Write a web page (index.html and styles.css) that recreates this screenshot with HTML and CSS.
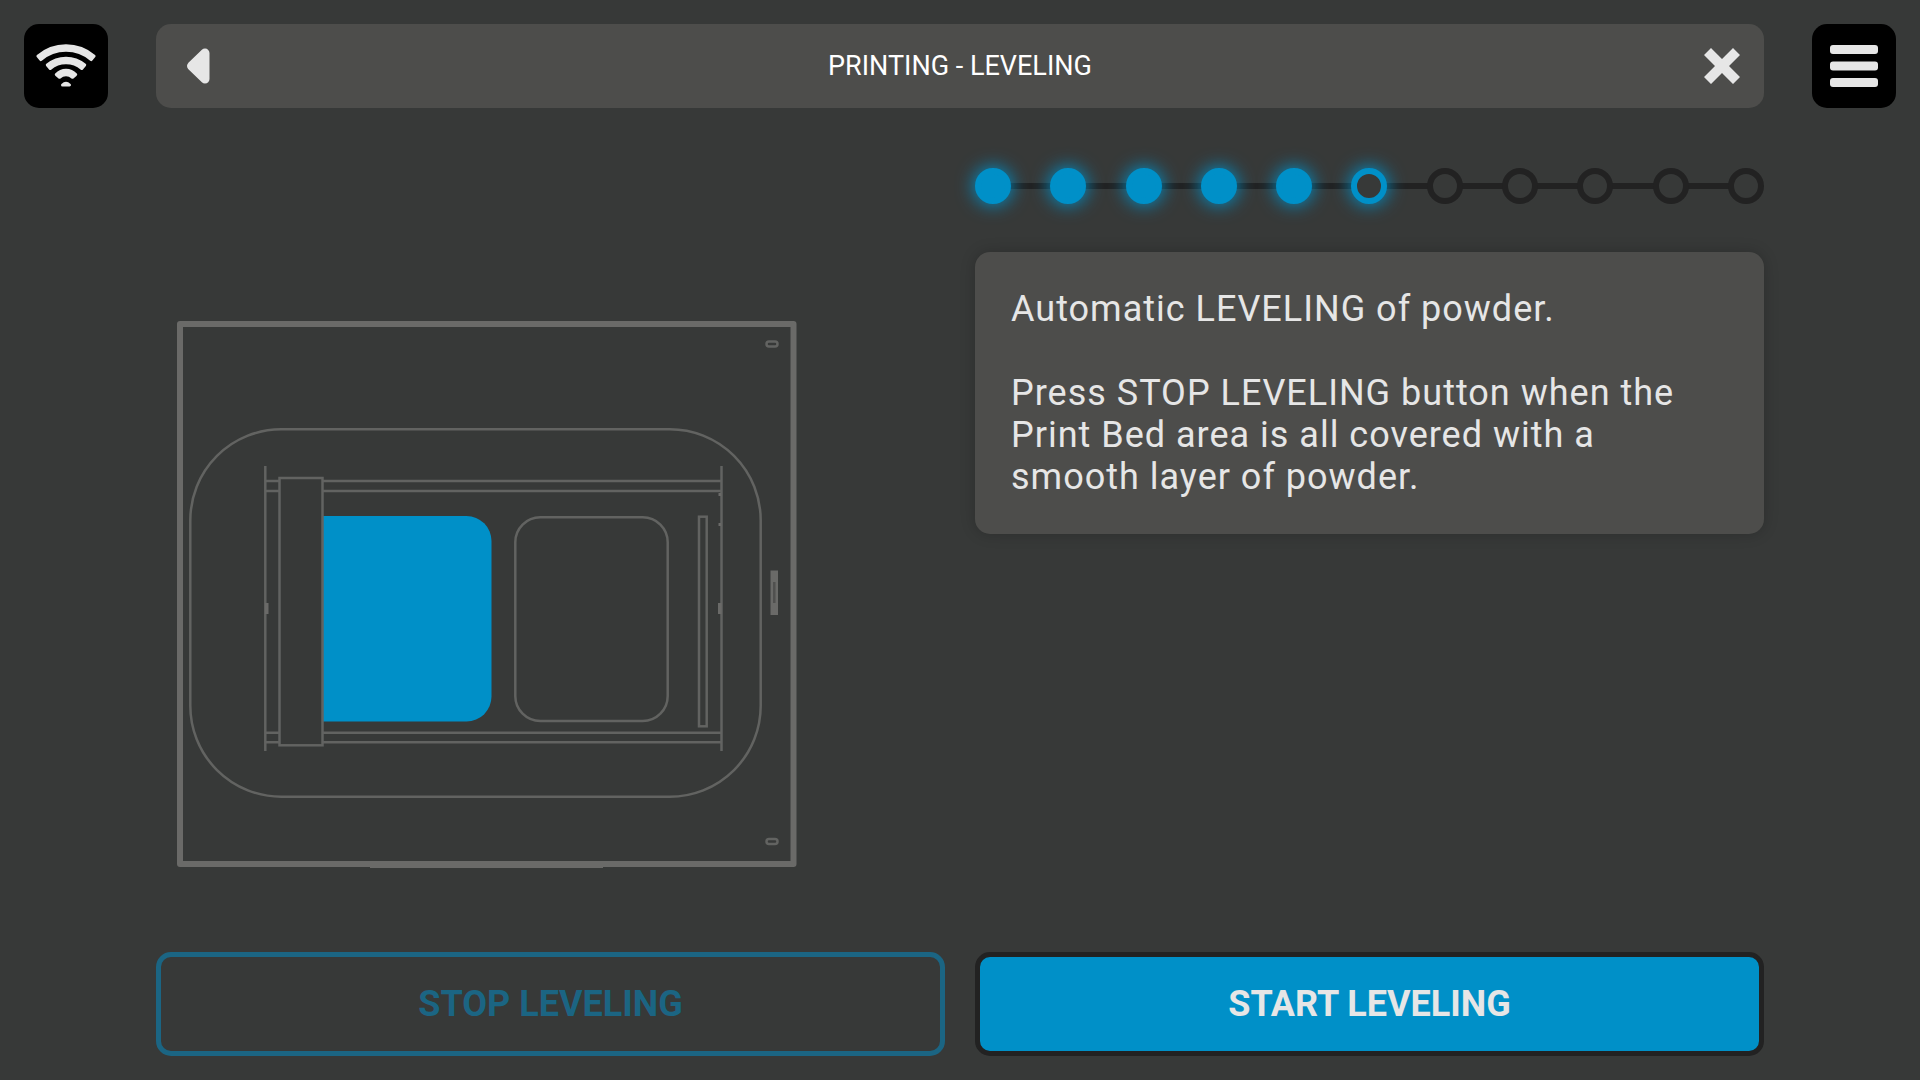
FILE: index.html
```html
<!DOCTYPE html>
<html lang="en">
<head>
    <meta charset="UTF-8">
    <meta name="viewport" content="width=device-width, initial-scale=1.0">
    <title>Printing - Leveling</title>
    <link rel="stylesheet" href="styles.css">
</head>
<body>
    <div class="screen">
        <header class="topbar">
            <button type="button" class="square-button" aria-label="Wi-Fi">
                <svg class="wifi-icon" viewBox="24 24 84 84">
                    <path d="M37.900 56.100A43.250 43.250 0 0 1 94.100 56.100L91.200 59.600A38.750 38.750 0 0 0 40.800 59.600Z"/>
                    <path d="M47.300 65A29.250 29.250 0 0 1 84.700 65L81.800 68.500A24.750 24.750 0 0 0 50.200 68.500Z"/>
                    <path d="M56.300 74.500A13.250 13.250 0 0 1 75.700 74.500L72.500 77.300A9.500 9.500 0 0 0 59.500 77.300Z"/>
                    <path d="M62.500 85Q66 81.500 69.500 85Z"/>
                </svg>
            </button>
            <div class="title-bar">
                <button type="button" class="icon-button" aria-label="Back">
                    <svg viewBox="0 0 36 36"><path class="back-shape" d="M25 5V31L11.500 18Z"/></svg>
                </button>
                <h1>PRINTING - LEVELING</h1>
                <button type="button" class="icon-button" aria-label="Close">
                    <svg viewBox="0 0 36 36"><path d="M7 0L18 11L29 0L36 7L25 18L36 29L29 36L18 25L7 36L0 29L11 18L0 7Z"/></svg>
                </button>
            </div>
            <button type="button" class="square-button" aria-label="Menu">
                <svg viewBox="0 0 84 84">
                    <rect x="18" y="21" width="48" height="9" rx="3"/>
                    <rect x="18" y="37.500" width="48" height="9" rx="3"/>
                    <rect x="18" y="54" width="48" height="9" rx="3"/>
                </svg>
            </button>
        </header>

        <main class="content">
            <!-- Top view of the printer -->
            <section class="diagram">
                <svg viewBox="156 312 789 560" role="img" aria-label="Printer, top view">
                    <!-- Housing -->
                    <rect class="housing" x="180" y="324" width="613.500" height="540"/>
                    <path class="solid" d="M370 862H603V868H370Z"/>
                    <rect x="766.500" y="341.500" width="11" height="5" rx="2.500"/>
                    <rect x="766.500" y="839" width="11" height="5" rx="2.500"/>
                    <path class="solid" d="M770.500 570.500H778V615H770.500Z"/>
                    <path class="slot" d="M774.300 582V603"/>
                    <rect x="190.300" y="429.300" width="570.400" height="367.400" rx="91"/>

                    <!-- Rails -->
                    <path d="M265.300 466V751M721.500 466V751"/>
                    <path d="M265 481H721M265 491H721M265 732.700H721M265 742.300H721"/>
                    <path class="solid" d="M265 603H268.500V614H265ZM718 603H721.500V614H718ZM718.500 493H721V496H718.500ZM718.500 523H721V526H718.500Z"/>

                    <!-- Beds -->
                    <path class="powder" d="M322 516H466.500A25 25 0 0 1 491.500 541V696.500A25 25 0 0 1 466.500 721.500H322Z"/>
                    <rect x="515.300" y="517.300" width="152.400" height="203.700" rx="25"/>
                    <rect x="699" y="516.700" width="7.700" height="209.600"/>

                    <!-- Leveling arm -->
                    <rect class="arm" x="279.500" y="478" width="43" height="267.300"/>
                </svg>
            </section>

            <section class="info">
                <ol class="steps" aria-label="Progress">
                    <li class="done"></li>
                    <li class="done"></li>
                    <li class="done"></li>
                    <li class="done"></li>
                    <li class="done"></li>
                    <li class="current" aria-current="step"></li>
                    <li></li>
                    <li></li>
                    <li></li>
                    <li></li>
                    <li></li>
                </ol>
                <div class="card">
                    <p>Automatic LEVELING of powder.</p>
                    <p>Press STOP LEVELING button when the Print Bed area is all covered with a smooth layer of powder.</p>
                </div>
            </section>
        </main>

        <footer class="actions">
            <button type="button" class="action" disabled>STOP LEVELING</button>
            <button type="button" class="action primary">START LEVELING</button>
        </footer>
    </div>
</body>
</html>
```
FILE: styles.css
```css
* {
    box-sizing: border-box;
}
html {
    background-color: #fff;
}
body {
    margin: 0;
    font-family: Roboto, sans-serif;
    color: #e6e6e6;
}
.screen {
    display: flex;
    flex-direction: column;
    min-height: calc(100vh - 1px);
    padding: 24px;
    background-color: #373938;
}
button {
    padding: 0;
    border: none;
    background: none;
    font-family: inherit;
    color: inherit;
    cursor: pointer;
}
button svg {
    display: block;
    width: 100%;
    fill: #e6e6e6;
}

/* Top bar */
.topbar {
    display: flex;
    gap: 48px;
}
.square-button {
    flex: none;
    width: 84px;
    height: 84px;
    border-radius: 15px;
    background-color: #000;
}
.wifi-icon {
    stroke: #e6e6e6;
    stroke-width: 3;
    stroke-linejoin: round;
}
.title-bar {
    flex: 1;
    display: flex;
    align-items: center;
    justify-content: space-between;
    padding: 0 24px;
    border-radius: 15px;
    background-color: #4d4d4b;
}
.title-bar h1 {
    margin: 0;
    font-size: 27px;
    font-weight: 400;
    color: #fff;
}
.icon-button {
    width: 36px;
    height: 36px;
}
.back-shape {
    stroke: #e6e6e6;
    stroke-width: 9;
    stroke-linejoin: round;
}

/* Content */
.content,
.actions {
    display: grid;
    grid-template-columns: 1fr 1fr;
    gap: 30px;
    padding: 0 132px;
}
.content {
    flex: 1;
    align-items: start;
    padding-top: 60px;
}
.diagram {
    padding-top: 144px;
}
.diagram svg {
    display: block;
    width: 100%;
    fill: none;
    stroke: #626361;
    stroke-width: 2.5;
}
.diagram .housing {
    stroke: #6a6a68;
    stroke-width: 6;
    stroke-linejoin: round;
}
.diagram .solid {
    fill: #6a6a68;
    stroke: none;
}
.diagram .slot {
    stroke: #50504f;
}
.diagram .powder {
    fill: #0090c8;
    stroke: none;
}
.diagram .arm {
    fill: #373938;
}

/* Progress */
.steps {
    display: flex;
    justify-content: space-between;
    margin: 0 0 48px;
    padding: 0;
    list-style: none;
    background: linear-gradient(#222, #222) center / calc(100% - 36px) 6px no-repeat;
}
.steps li {
    width: 36px;
    height: 36px;
    border: 6px solid #222;
    border-radius: 50%;
    background-color: #373938;
}
.steps .done,
.steps .current {
    border-color: #0090c8;
    box-shadow: 0 0 18px 1px #0090c8;
}
.steps .done {
    background-color: #0090c8;
}

.card {
    padding: 36px;
    border-radius: 15px;
    background-color: #4d4d4b;
    box-shadow: 0 0 15px rgba(0, 0, 0, 0.2);
    font-size: 36px;
    line-height: 42px;
    letter-spacing: 1px;
}
.card p {
    margin: 0 0 42px;
}
.card p:last-child {
    margin-bottom: 0;
}

/* Actions */
.action {
    height: 104px;
    border: 5px solid #1b6583;
    border-radius: 15px;
    font-size: 36px;
    font-weight: 700;
    color: #1b6583;
}
.action:disabled {
    cursor: default;
}
.primary {
    border-color: #222;
    background-color: #0090c8;
    color: #e6e6e6;
}
```
